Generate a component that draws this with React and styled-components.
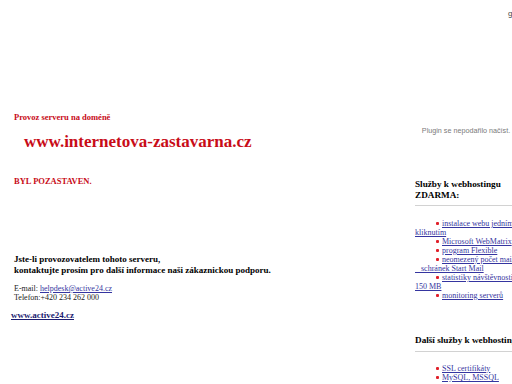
import React from "react";
import styled, {createGlobalStyle} from "styled-components";

const GlobalStyle = createGlobalStyle`
	html, body {
		margin: 0;
		padding: 0;
		background: #ffffff;
		overflow: hidden;
	}
	body {
		font-family: "Liberation Serif", "Times New Roman", serif;
		color: #000000;
	}
`;

const Page = styled.div`
	display: flex;
	width: 680px;
	height: 384px;
`;

const LeftColumn = styled.div`
	width: 401px;
	padding-left: 14px;
	box-sizing: border-box;
	flex-shrink: 0;
`;

const RedLine = styled.div`
	font-family: "Liberation Serif", "Times New Roman", serif;
	color: #c80c18;
	font-weight: bold;
	font-size: ${(props) => props.size || 8.5}px;
	line-height: ${(props) => props.lh || 10}px;
	margin-top: ${(props) => props.top || 0}px;
	margin-left: ${(props) => props.indent || 0}px;
	white-space: nowrap;
`;

const Notice = styled.div`
	margin-top: 68px;
	font-weight: bold;
	font-size: 9px;
	line-height: 11px;
	white-space: nowrap;
`;

const Contact = styled.div`
	margin-top: 8px;
	font-size: 8px;
	line-height: 9px;
	color: #222222;
	white-space: nowrap;
`;

const Link = styled.a`
	color: #3535a0;
	text-decoration: underline;
`;

const HomeLink = styled.a`
	display: block;
	margin-top: 8px;
	margin-left: -3px;
	font-size: 9px;
	line-height: 10px;
	font-weight: bold;
	color: #1c1c70;
	text-decoration: underline;
`;

const RightColumn = styled.div`
	width: 260px;
	flex-shrink: 0;
	padding-left: 14px;
	box-sizing: border-box;
`;

const TopMark = styled.div`
	margin-top: 9px;
	padding-left: 93px;
	font-family: "Liberation Sans", Arial, sans-serif;
	font-size: 8px;
	line-height: 10px;
	color: #444444;
`;

const PluginBox = styled.div`
	margin-top: 107px;
	width: 102px;
	text-align: center;
	font-family: "Liberation Sans", Arial, sans-serif;
	font-size: 7.2px;
	line-height: 9px;
	color: #7a7a7a;
	white-space: nowrap;
`;

const Heading = styled.div`
	margin-top: ${(props) => props.top}px;
	font-weight: bold;
	font-size: 9.2px;
	line-height: 11px;
	white-space: nowrap;
`;

const Rule = styled.div`
	margin-top: ${(props) => props.top}px;
	height: 1px;
	background: #d2d2d2;
`;

const List = styled.ul`
	list-style: none;
	margin: ${(props) => props.top}px 0 0 0;
	padding: 0;
`;

const Item = styled.li`
	font-size: 8px;
	line-height: 9px;
	text-indent: 21px;
	white-space: nowrap;

	&::before {
		content: "";
		display: inline-block;
		width: 3px;
		height: 3px;
		margin-right: 3px;
		background: #e0202a;
		border-radius: 1px;
		vertical-align: 1px;
	}
`;

const ItemLink = styled.a`
	color: #3535a0;
	text-decoration: underline;
`;

const freeServices = [
	{first: "instalace webu jedním", rest: "kliknutím"},
	{first: "Microsoft WebMatrix"},
	{first: "program Flexible"},
	{first: "neomezený počet mailových", rest: "\u00a0\u00a0\u00a0schránek Start Mail"},
	{first: "statistiky návštěvnosti", rest: "150 MB"},
	{first: "monitoring serverů"},
];

const otherServices = ["SSL certifikáty", "MySQL, MSSQL"];

const App = () => {
	return (
		<>
			<GlobalStyle />
			<Page>
				<LeftColumn>
					<RedLine top={112}>Provoz serveru na doméně</RedLine>
					<RedLine top={10} size={17} lh={20} indent={10}>
						www.internetova-zastavarna.cz
					</RedLine>
					<RedLine top={24}>BYL POZASTAVEN.</RedLine>
					<Notice>
						Jste-li provozovatelem tohoto serveru,
						<br />
						kontaktujte prosím pro další informace naši zákaznickou podporu.
					</Notice>
					<Contact>
						E-mail: <Link href="#">helpdesk@active24.cz</Link>
						<br />
						Telefon:+420 234 262 000
					</Contact>
					<HomeLink href="#">www.active24.cz</HomeLink>
				</LeftColumn>

				<RightColumn>
					<TopMark>g</TopMark>
					<PluginBox>Plugin se nepodařilo načíst.</PluginBox>
					<Heading top={44}>
						Služby k webhostingu
						<br />
						ZDARMA:
					</Heading>
					<Rule top={4} />
					<List top={13}>
						{freeServices.map((item) => (
							<Item key={item.first}>
								<ItemLink href="#">
									{item.first}
									{item.rest && <br />}
									{item.rest}
								</ItemLink>
							</Item>
						))}
					</List>
					<Heading top={35}>Další služby k webhostingu</Heading>
					<Rule top={5} />
					<List top={12}>
						{otherServices.map((name) => (
							<Item key={name}>
								<ItemLink href="#">{name}</ItemLink>
							</Item>
						))}
					</List>
				</RightColumn>
			</Page>
		</>
	);
};

export default App;
